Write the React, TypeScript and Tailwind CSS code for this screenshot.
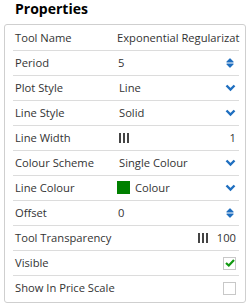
import React from "react";

function Chevron() {
	return (
		<svg width="11" height="8" viewBox="0 0 11 8" className="shrink-0">
			<path d="M1.5 1.5 L5.5 5.5 L9.5 1.5" fill="none" stroke="#1f6fc0" strokeWidth="2.4" />
		</svg>
	);
}

function Spinner() {
	return (
		<svg width="8" height="12" viewBox="0 0 8 12" className="shrink-0">
			<path d="M1 5 L4 2 L7 5 Z" fill="#1f6fc0" stroke="#1f6fc0" strokeWidth="1.2" strokeLinejoin="round" />
			<path d="M1 7 L4 10 L7 7 Z" fill="#1f6fc0" stroke="#1f6fc0" strokeWidth="1.2" strokeLinejoin="round" />
		</svg>
	);
}

function Bars() {
	return (
		<span className="flex gap-[2px] items-center">
			<span className="w-[2px] h-[10px] bg-[#444]" />
			<span className="w-[2px] h-[10px] bg-[#444]" />
			<span className="w-[2px] h-[10px] bg-[#444]" />
		</span>
	);
}

function Checkbox({ checked }: { checked?: boolean }) {
	return (
		<span className="w-[13px] h-[13px] border border-[#c8c8c8] bg-white flex items-center justify-center">
			{checked && (
				<svg width="10" height="8" viewBox="0 0 10 8">
					<path d="M1 4 L3.8 6.5 L9 1" fill="none" stroke="#119911" strokeWidth="2.2" />
				</svg>
			)}
		</span>
	);
}

function Row({ label, children, last }: { label: string; children?: React.ReactNode; last?: boolean }) {
	return (
		<div className={"flex items-center h-[25px] ml-[8px] mr-[6px] pr-[3px] " + (last ? "" : "border-b border-[#dcdcdc]")}>
			<div className="w-[104px] pl-[2px] shrink-0 whitespace-nowrap">{label}</div>
			<div className="flex-1 flex items-center min-w-0">{children}</div>
		</div>
	);
}

export default function App() {
	return (
		<div className="w-[250px] h-[307px] bg-white text-[#333] text-[11.2px] overflow-hidden" style={{ fontFamily: "'Open Sans', sans-serif" }}>
			<h1 className="text-[14px] font-bold text-black leading-[18px] pl-[15px] h-[24px]">Properties</h1>
			<div className="ml-[4px] mr-[4px] border border-[#cfcfcf] rounded-[3px] py-[1px]">
				<Row label="Tool Name">
					<span className="whitespace-nowrap">Exponential Regularizat</span>
				</Row>
				<Row label="Period">
					<span className="ml-[1px]">5</span>
					<span className="ml-auto mr-[2px] flex"><Spinner /></span>
				</Row>
				<Row label="Plot Style">
					<span className="ml-[2px]">Line</span>
					<span className="ml-auto flex"><Chevron /></span>
				</Row>
				<Row label="Line Style">
					<span className="ml-[2px]">Solid</span>
					<span className="ml-auto flex"><Chevron /></span>
				</Row>
				<Row label="Line Width">
					<span className="ml-[2px]"><Bars /></span>
					<span className="ml-auto">1</span>
				</Row>
				<Row label="Colour Scheme">
					<span className="ml-[2px]">Single Colour</span>
					<span className="ml-auto flex"><Chevron /></span>
				</Row>
				<Row label="Line Colour">
					<span className="w-[13px] h-[13px] bg-[#008000]" />
					<span className="ml-[5px]">Colour</span>
					<span className="ml-auto flex"><Chevron /></span>
				</Row>
				<Row label="Offset">
					<span className="ml-[1px]">0</span>
					<span className="ml-auto mr-[2px] flex"><Spinner /></span>
				</Row>
				<Row label="Tool Transparency">
					<span className="ml-auto flex items-center gap-[9px]">
						<Bars />
						<span>100</span>
					</span>
				</Row>
				<Row label="Visible">
					<span className="ml-auto"><Checkbox checked /></span>
				</Row>
				<Row label="Show In Price Scale" last>
					<span className="ml-auto"><Checkbox /></span>
				</Row>
			</div>
		</div>
	);
}
